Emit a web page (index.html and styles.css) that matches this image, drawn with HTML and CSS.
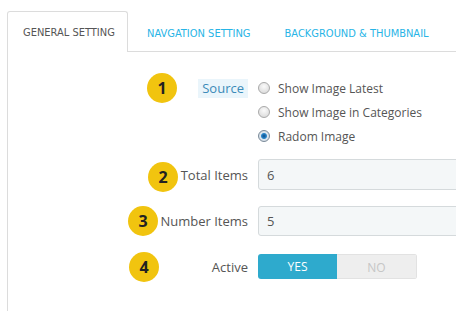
FILE: index.html
```html
<!DOCTYPE html>
<html lang="en">
<head>
    <meta charset="UTF-8" />
    <meta name="viewport" content="width=device-width, initial-scale=1" />
    <title>Module Settings</title>
    <link rel="stylesheet" href="styles.css">
</head>
<body>
    <div class="settings">
        <ul class="tabs">
            <li class="tab active">General Setting</li>
            <li class="tab">Navgation Setting</li>
            <li class="tab">Background &amp; Thumbnail</li>
        </ul>

        <div class="panel">
            <div class="form-row row-source">
                <span class="badge b1">1</span>
                <div class="form-label"><span class="label-hl">Source</span></div>
                <div class="radio-list">
                    <label class="radio"><input type="radio" name="source" /> Show Image Latest</label>
                    <label class="radio"><input type="radio" name="source" /> Show Image in Categories</label>
                    <label class="radio"><input type="radio" name="source" checked /> Radom Image</label>
                </div>
            </div>

            <div class="form-row row-total">
                <span class="badge b2">2</span>
                <label class="form-label" for="totalItems">Total Items</label>
                <input class="text-input" type="text" id="totalItems" value="6" />
            </div>

            <div class="form-row row-number">
                <span class="badge b3">3</span>
                <label class="form-label" for="numberItems">Number Items</label>
                <input class="text-input" type="text" id="numberItems" value="5" />
            </div>

            <div class="form-row row-active">
                <span class="badge b4">4</span>
                <div class="form-label">Active</div>
                <div class="switch">
                    <span class="switch-opt on">YES</span>
                    <span class="switch-opt">NO</span>
                </div>
            </div>
        </div>
    </div>
</body>
</html>
```

FILE: styles.css
```css
* {
    margin: 0; padding: 0; box-sizing: border-box;
}
body {
    background: #fff;
    font-family: 'Open Sans', sans-serif;
    color: #555;
    overflow: hidden;
    height: 311px;
}
.settings {
    padding: 11px 0 0 7px;
    width: 456px;
    overflow: hidden;
}
.tabs {
    list-style: none;
    display: flex;
    border-bottom: 1px solid #dcdcdc;
    height: 41px;
    width: 600px;
}
.tab {
    font-family: 'DejaVu Sans Condensed', 'DejaVu Sans', sans-serif;
    font-size: 11px;
    text-transform: uppercase;
    color: #27b4e6;
    line-height: 40px;
    padding: 3px 15px 0 19px;
}
.tab.active {
    color: #555;
    background: #fff;
    border: 1px solid #dcdcdc;
    border-bottom: none;
    border-radius: 3px 3px 0 0;
    height: 41px;
    width: 121px;
    padding: 3px 0 0 15px;
    line-height: 36px;
}
.panel {
    border-left: 1px solid #dcdcdc;
    height: 270px;
    padding-top: 24px;
    width: 600px;
}
.form-row {
    position: relative;
    display: flex;
    align-items: center;
}
.form-label {
    width: 250px;
    text-align: right;
    font-size: 13px;
    color: #555;
    padding-right: 10px;
    flex-shrink: 0;
}
.row-source {
    align-items: flex-start;
}
.row-source .form-label {
    padding-top: 3px;
}
.label-hl {
    display: inline-block;
    background: #eaf5fb;
    color: #3b8ab8;
    padding: 0 4px;
    line-height: 19px;
}
.radio-list {
    display: flex;
    flex-direction: column;
}
.radio {
    display: flex;
    align-items: center;
    height: 24px;
    font-size: 12px;
    color: #555;
}
.radio input {
    appearance: none;
    width: 12px;
    height: 12px;
    border-radius: 50%;
    border: 1px solid #a9a9a9;
    background: radial-gradient(circle at 50% 35%, #fafafa, #d5d5d5);
    margin: 0 8px 0 0;
}
.radio input:checked {
    border-color: #7a8a99;
    background: radial-gradient(circle, #0d4c8a 0, #2a86c9 2.5px, #dde6ee 3.5px, #d0d8e0 6px);
}
.row-total {
    margin-top: 11px;
}
.row-number {
    margin-top: 16px;
}
.row-active {
    margin-top: 18px;
}
.text-input {
    width: 260px;
    height: 31px;
    border: 1px solid #d5dadc;
    border-radius: 3px;
    background: #f4f7f8;
    font-family: 'Open Sans', sans-serif;
    font-size: 13px;
    color: #555;
    padding: 0 8px;
}
.row-number .text-input {
    height: 30px;
}
.switch {
    display: flex;
    width: 159px;
    height: 25px;
    border-radius: 3px;
    overflow: hidden;
}
.switch-opt {
    flex: 1;
    text-align: center;
    line-height: 25px;
    font-size: 12px;
    background: #eeeeee;
    color: #c6c6c6;
    border: 1px solid #e2e2e2;
    border-left: none;
}
.switch-opt.on {
    background: #2eaacd;
    color: #fff;
    border: none;
}
.badge {
    position: absolute;
    width: 30px;
    height: 30px;
    border-radius: 50%;
    background: #f1c40f;
    color: #222;
    font-weight: bold;
    font-size: 16px;
    line-height: 30px;
    text-align: center;
}
.b1 { left: 139px; top: -3px; }
.b2 { left: 140px; top: 3px; }
.b3 { left: 120px; top: 0; }
.b4 { left: 121px; top: -2px; }
```
